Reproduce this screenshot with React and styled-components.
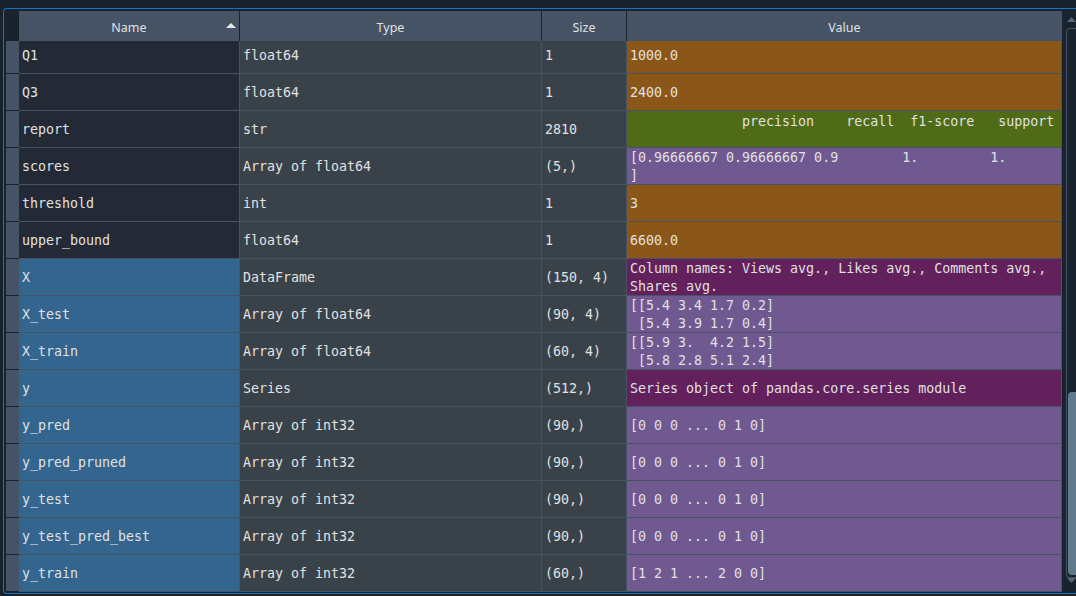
import styled, { createGlobalStyle, css } from 'styled-components';

const GlobalStyle = createGlobalStyle`
  html, body {
    margin: 0;
    padding: 0;
    background: #19232D;
    overflow: hidden;
  }
`;

const COLUMNS = '13px 221px 302px 85px 435px';

const VALUE_BG = {
  num: '#8B5718',
  str: '#4F6B17',
  array: '#705891',
  frame: '#62205C',
};

const rows = [
  { name: 'Q1', type: 'float64', size: '1', value: '1000.0', kind: 'num' },
  { name: 'Q3', type: 'float64', size: '1', value: '2400.0', kind: 'num' },
  { name: 'report', type: 'str', size: '2810', value: '              precision    recall  f1-score   support', kind: 'str', top: true },
  { name: 'scores', type: 'Array of float64', size: '(5,)', value: '[0.96666667 0.96666667 0.9        1.         1.        ]', kind: 'array' },
  { name: 'threshold', type: 'int', size: '1', value: '3', kind: 'num' },
  { name: 'upper_bound', type: 'float64', size: '1', value: '6600.0', kind: 'num' },
  { name: 'X', type: 'DataFrame', size: '(150, 4)', value: 'Column names: Views avg., Likes avg., Comments avg., Shares avg.', kind: 'frame', sel: true },
  { name: 'X_test', type: 'Array of float64', size: '(90, 4)', value: '[[5.4 3.4 1.7 0.2]\n [5.4 3.9 1.7 0.4]', kind: 'array', sel: true },
  { name: 'X_train', type: 'Array of float64', size: '(60, 4)', value: '[[5.9 3.  4.2 1.5]\n [5.8 2.8 5.1 2.4]', kind: 'array', sel: true },
  { name: 'y', type: 'Series', size: '(512,)', value: 'Series object of pandas.core.series module', kind: 'frame', sel: true },
  { name: 'y_pred', type: 'Array of int32', size: '(90,)', value: '[0 0 0 ... 0 1 0]', kind: 'array', sel: true },
  { name: 'y_pred_pruned', type: 'Array of int32', size: '(90,)', value: '[0 0 0 ... 0 1 0]', kind: 'array', sel: true },
  { name: 'y_test', type: 'Array of int32', size: '(90,)', value: '[0 0 0 ... 0 1 0]', kind: 'array', sel: true },
  { name: 'y_test_pred_best', type: 'Array of int32', size: '(90,)', value: '[0 0 0 ... 0 1 0]', kind: 'array', sel: true },
  { name: 'y_train', type: 'Array of int32', size: '(60,)', value: '[1 2 1 ... 2 0 0]', kind: 'array', sel: true },
];

const Page = styled.div`
  box-sizing: border-box;
  height: 596px;
  padding: 8px 0 0 3px;
`;

const Frame = styled.div`
  box-sizing: border-box;
  height: 586px;
  border: 1px solid #1A72BB;
  border-right: none;
  border-radius: 4px 0 0 4px;
  padding: 2px 0 1px 2px;
  display: grid;
  grid-template-columns: 1056px 1fr;
  overflow: hidden;
`;

const Table = styled.div`
  display: flex;
  flex-direction: column;
  min-height: 0;
`;

const Header = styled.div`
  display: grid;
  grid-template-columns: ${COLUMNS};
  height: 30px;
  flex: none;
`;

const Corner = styled.div`
  background: #19232D;
`;

const HeadCell = styled.div`
  position: relative;
  display: flex;
  align-items: center;
  justify-content: center;
  padding-top: 2px;
  background: #455364;
  color: #E0E1E3;
  font-family: 'Noto Sans', 'Open Sans', sans-serif;
  font-size: 12.5px;
  border-right: ${(p) => (p.$last ? 'none' : '1px solid #19232D')};
`;

const SortArrow = styled.svg`
  position: absolute;
  right: 3px;
  top: 12px;
`;

const Body = styled.div`
  flex: 1;
  overflow: hidden;
`;

const Rows = styled.div`
  margin-top: -4px;
`;

const Row = styled.div`
  display: grid;
  grid-template-columns: ${COLUMNS};
  height: 37px;
`;

const RowHead = styled.div`
  background: #455364;
  border-bottom: 1px solid #19232D;
`;

const Cell = styled.div`
  box-sizing: border-box;
  display: flex;
  align-items: ${(p) => (p.$top ? 'flex-start' : 'center')};
  padding: ${(p) => (p.$top ? '2px 3px 0' : '2px 3px 0')};
  border-right: 1px solid #455364;
  border-bottom: 1px solid #455364;
  overflow: hidden;
  color: #E0E1E3;
  font-family: 'DejaVu Sans Mono', 'Liberation Mono', monospace;
  font-size: 13.3px;
  line-height: 18px;
  white-space: pre-wrap;
  background: #3A4249;
  ${(p) =>
    p.$name &&
    css`
      background: ${p.$sel ? '#34658F' : '#232A35'};
    `}
  ${(p) =>
    p.$kind &&
    css`
      background: ${VALUE_BG[p.$kind]};
    `}
`;

const Scrollbar = styled.div`
  display: flex;
  flex-direction: column;
  min-height: 0;
`;

const ArrowBox = styled.div`
  height: ${(p) => p.$h}px;
  display: flex;
  justify-content: center;
  align-items: ${(p) => (p.$down ? 'flex-start' : 'center')};
  padding-left: 4px;
`;

const Track = styled.div`
  flex: 1;
  margin-left: 4px;
  border: 1px solid #455364;
  border-right: none;
  border-radius: 4px 0 0 4px;
  padding: 0 0 2px 1px;
  display: flex;
  flex-direction: column;
  justify-content: flex-end;
`;

const Handle = styled.div`
  height: 183px;
  background: #60798B;
  border-radius: 4px 0 0 4px;
`;

function Triangle({ down }) {
  return (
    <svg width="9" height="5" viewBox="0 0 9 5">
      <polygon points={down ? '0,0 9,0 4.5,5' : '0,5 9,5 4.5,0'} fill="#52657A" />
    </svg>
  );
}

export default function App() {
  return (
    <Page>
      <GlobalStyle />
      <Frame>
        <Table>
          <Header>
            <Corner />
            <HeadCell>
              Name
              <SortArrow width="10" height="5" viewBox="0 0 10 5">
                <polygon points="0,5 10,5 5,0" fill="#E6E8EA" />
              </SortArrow>
            </HeadCell>
            <HeadCell>Type</HeadCell>
            <HeadCell>Size</HeadCell>
            <HeadCell $last>Value</HeadCell>
          </Header>
          <Body>
            <Rows>
              {rows.map((r) => (
                <Row key={r.name}>
                  <RowHead />
                  <Cell $name $sel={r.sel}>{r.name}</Cell>
                  <Cell>{r.type}</Cell>
                  <Cell>{r.size}</Cell>
                  <Cell $kind={r.kind} $top={r.top}>{r.value}</Cell>
                </Row>
              ))}
            </Rows>
          </Body>
        </Table>
        <Scrollbar>
          <ArrowBox $h={17}>
            <Triangle />
          </ArrowBox>
          <Track>
            <Handle />
          </Track>
          <ArrowBox $h={14} $down>
            <Triangle down />
          </ArrowBox>
        </Scrollbar>
      </Frame>
    </Page>
  );
}
